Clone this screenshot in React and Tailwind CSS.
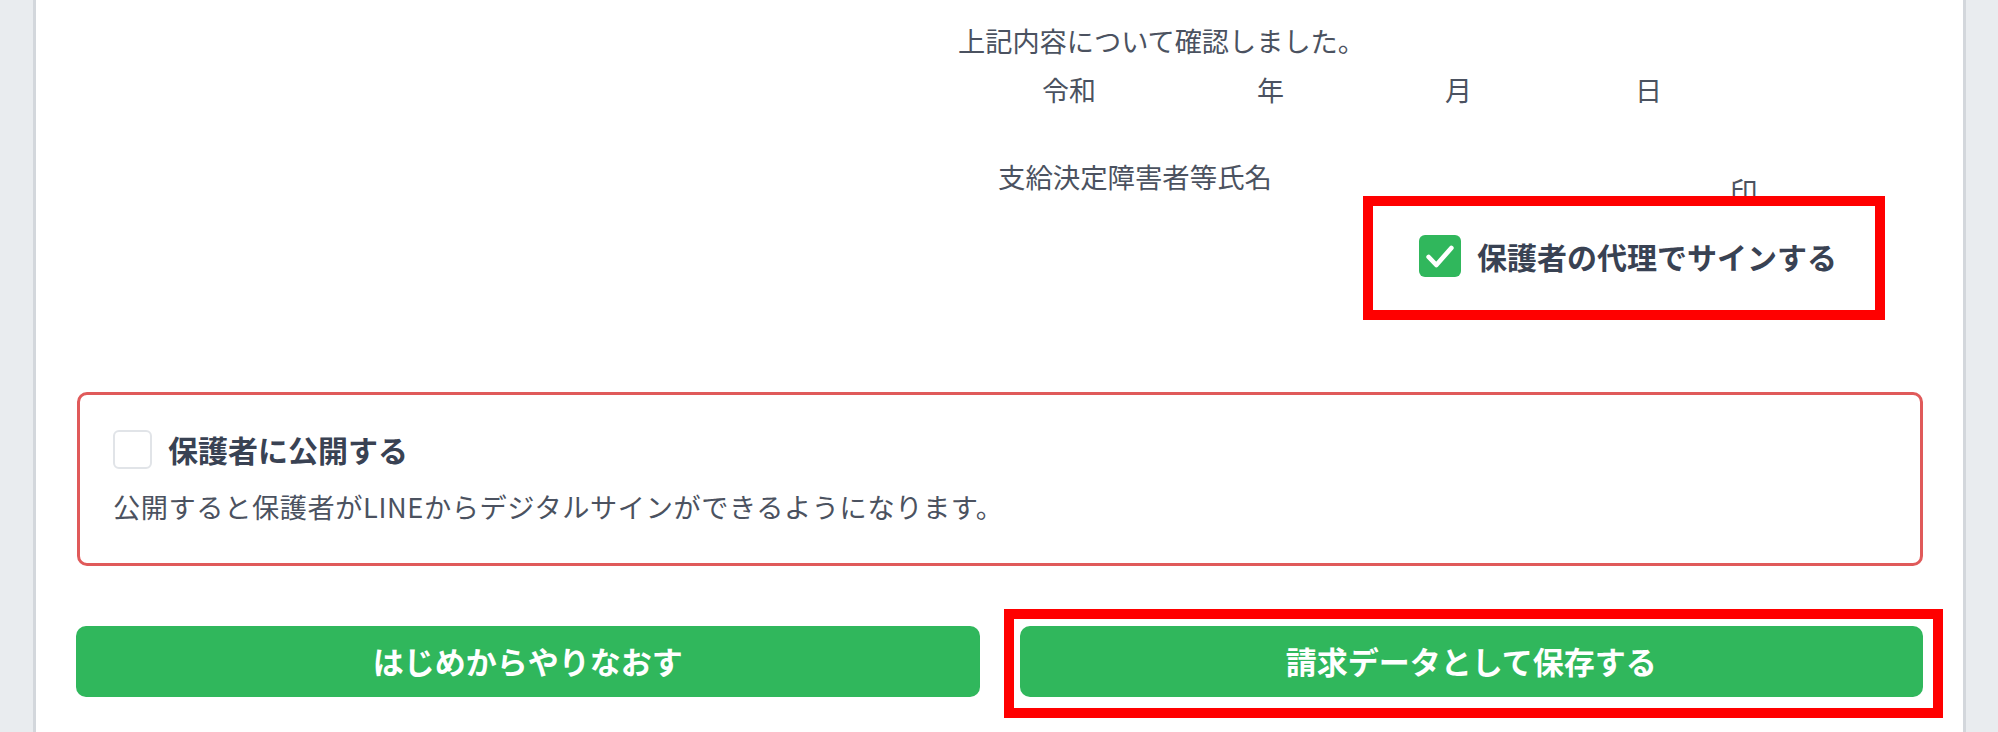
import React from "react";

const CheckBox = ({ checked, size }) => {
  if (checked) {
    return (
      <span className={`${size} flex items-center justify-center rounded-[6px] bg-[#30b75c] shrink-0`}>
        <svg viewBox="0 0 24 24" className="w-[40px] h-[40px]" fill="none" stroke="#fff" strokeWidth="2.8" strokeLinecap="round" strokeLinejoin="round">
          <path d="M5.2 12.6 9.8 17.4 18.8 7.2" />
        </svg>
      </span>
    );
  }
  return <span className={`${size} rounded-[6px] border-2 border-[#e1e4e8] bg-white shrink-0`}></span>;
};

const App = () => {
  return (
    <div
      className="w-full h-[732px] overflow-hidden bg-[#e9ecef] pl-[33px] pr-[32px]"
      style={{ fontFamily: '"Noto Sans CJK JP", "Noto Sans", sans-serif' }}
    >
      <div className="relative h-full bg-white border-x-[3px] border-[#d3d7dc] pl-[41px] pr-[40px] pt-[20px] text-[#4b5260]">
        {/* signature block */}
        <div className="text-[27.2px] leading-[40px] ml-[881px] whitespace-nowrap">上記内容について確認しました。</div>

        <div className="mt-[10px] flex text-[27px] leading-[40px] whitespace-nowrap">
          <span className="ml-[965px] w-[215px]">令和</span>
          <span className="w-[188px]">年</span>
          <span className="w-[190px]">月</span>
          <span>日</span>
        </div>

        <div className="mt-[46px] flex items-start text-[27.4px] leading-[40px] whitespace-nowrap">
          <span className="ml-[921px] w-[732px]">支給決定障害者等氏名</span>
          <span className="mt-[14px]">印</span>
        </div>

        <div className="mt-[25px] ml-[1342px] flex items-center gap-[16px] whitespace-nowrap">
          <CheckBox checked size="w-[42px] h-[42px]" />
          <span className="text-[30px] leading-[42px] font-bold text-[#394253]">保護者の代理でサインする</span>
        </div>

        {/* publish box */}
        <div className="mt-[115px] rounded-[10px] border-[3px] border-[#e05a5a] pt-[34px] pb-[37px] px-[33px]">
          <div className="flex items-center gap-[16px]">
            <CheckBox size="w-[39px] h-[39px]" />
            <span className="text-[30px] leading-[40px] font-bold text-[#394253]">保護者に公開する</span>
          </div>
          <div className="mt-[17px] text-[27.2px] leading-[40px] tracking-[0.6px] whitespace-nowrap">
            公開すると保護者がLINEからデジタルサインができるようになります。
          </div>
        </div>

        <div className="mt-[60px] flex gap-[40px] -ml-px">
          <button className="flex-1 h-[71px] rounded-[10px] bg-[#30b75c] text-white text-[31px] font-bold">
            はじめからやりなおす
          </button>
          <button className="flex-1 h-[71px] rounded-[10px] bg-[#30b75c] text-white text-[31px] font-bold">
            請求データとして保存する
          </button>
        </div>

        {/* annotation frames */}
        <div className="absolute left-[1327px] top-[196px] w-[522px] h-[124px] border-[10px] border-[#ff0000] pointer-events-none"></div>
        <div className="absolute left-[968px] top-[609px] w-[939px] h-[109px] border-[10px] border-[#ff0000] pointer-events-none"></div>
      </div>
    </div>
  );
};

export default App;
